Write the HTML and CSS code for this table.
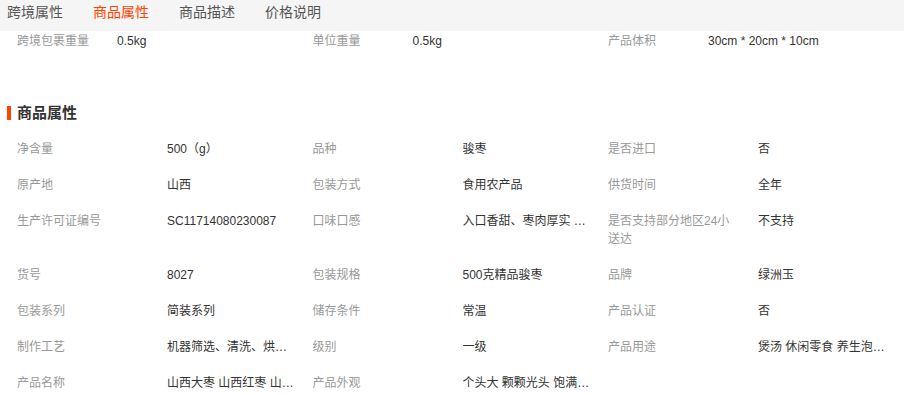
FILE: index.html
```html
<!DOCTYPE html>
<html lang="zh-CN">
<head>
<meta charset="utf-8">
<title>商品属性</title>
<link rel="stylesheet" href="styles.css">
</head>
<body>
<nav class="tabs">
  <span class="tab">跨境属性</span>
  <span class="tab active">商品属性</span>
  <span class="tab">商品描述</span>
  <span class="tab">价格说明</span>
</nav>
<div class="cross">
  <span class="c-label">跨境包裹重量</span><span class="c-value">0.5kg</span>
  <span class="c-label">单位重量</span><span class="c-value">0.5kg</span>
  <span class="c-label">产品体积</span><span class="c-value">30cm * 20cm * 10cm</span>
</div>
<h2 class="section-title">商品属性</h2>
<div class="attrs">
  <span class="a-label">净含量</span><span class="a-value">500（g）</span>
  <span class="a-label">品种</span><span class="a-value">骏枣</span>
  <span class="a-label">是否进口</span><span class="a-value">否</span>

  <span class="a-label">原产地</span><span class="a-value">山西</span>
  <span class="a-label">包装方式</span><span class="a-value">食用农产品</span>
  <span class="a-label">供货时间</span><span class="a-value">全年</span>

  <span class="a-label">生产许可证编号</span><span class="a-value">SC11714080230087</span>
  <span class="a-label">口味口感</span><span class="a-value">入口香甜、枣肉厚实 核小肉厚</span>
  <span class="a-label">是否支持部分地区24小送达</span><span class="a-value">不支持</span>

  <span class="a-label">货号</span><span class="a-value">8027</span>
  <span class="a-label">包装规格</span><span class="a-value">500克精品骏枣</span>
  <span class="a-label">品牌</span><span class="a-value">绿洲玉</span>

  <span class="a-label">包装系列</span><span class="a-value">简装系列</span>
  <span class="a-label">储存条件</span><span class="a-value">常温</span>
  <span class="a-label">产品认证</span><span class="a-value">否</span>

  <span class="a-label">制作工艺</span><span class="a-value">机器筛选、清洗、烘干、包装</span>
  <span class="a-label">级别</span><span class="a-value">一级</span>
  <span class="a-label">产品用途</span><span class="a-value">煲汤 休闲零食 养生泡茶 送礼佳品</span>

  <span class="a-label">产品名称</span><span class="a-value">山西大枣 山西红枣 山西骏枣</span>
  <span class="a-label">产品外观</span><span class="a-value">个头大 颗颗光头 饱满圆润</span>
</div>
</body>
</html>
```

FILE: styles.css
```css
html, body {
  margin: 0;
  padding: 0;
  background: #fff;
}
body {
  font-family: "Liberation Sans", "Noto Sans CJK SC", sans-serif;
  font-size: 12px;
  color: #333;
}
.tabs {
  display: flex;
  gap: 30px;
  height: 31px;
  padding-left: 7px;
  background: #f5f5f5;
  font-size: 14px;
  line-height: 24px;
  box-sizing: border-box;
}
.tab {
  color: #555;
}
.tab.active {
  color: #ff4400;
}
.cross {
  display: grid;
  grid-template-columns: 100px 195.5px 100px 195.5px 100px 195.5px;
  padding: 1px 0 0 17px;
  line-height: 18px;
}
.c-label {
  color: #999;
}
.c-value {
  color: #333;
}
.section-title {
  margin: 56px 0 0 7px;
  padding-left: 6px;
  border-left: 4px solid #ff4400;
  font-size: 15px;
  font-weight: bold;
  line-height: 14px;
  height: 14px;
  color: #333;
}
.attrs {
  display: grid;
  grid-template-columns: 150px 145.5px 150px 145.5px 150px 145.5px;
  padding: 20px 0 0 17px;
  row-gap: 18px;
  line-height: 18px;
  align-items: start;
}
.a-label {
  color: #999;
  width: 125px;
}
.a-value {
  color: #333;
  width: 128px;
  white-space: nowrap;
  overflow: hidden;
  text-overflow: ellipsis;
}
```
